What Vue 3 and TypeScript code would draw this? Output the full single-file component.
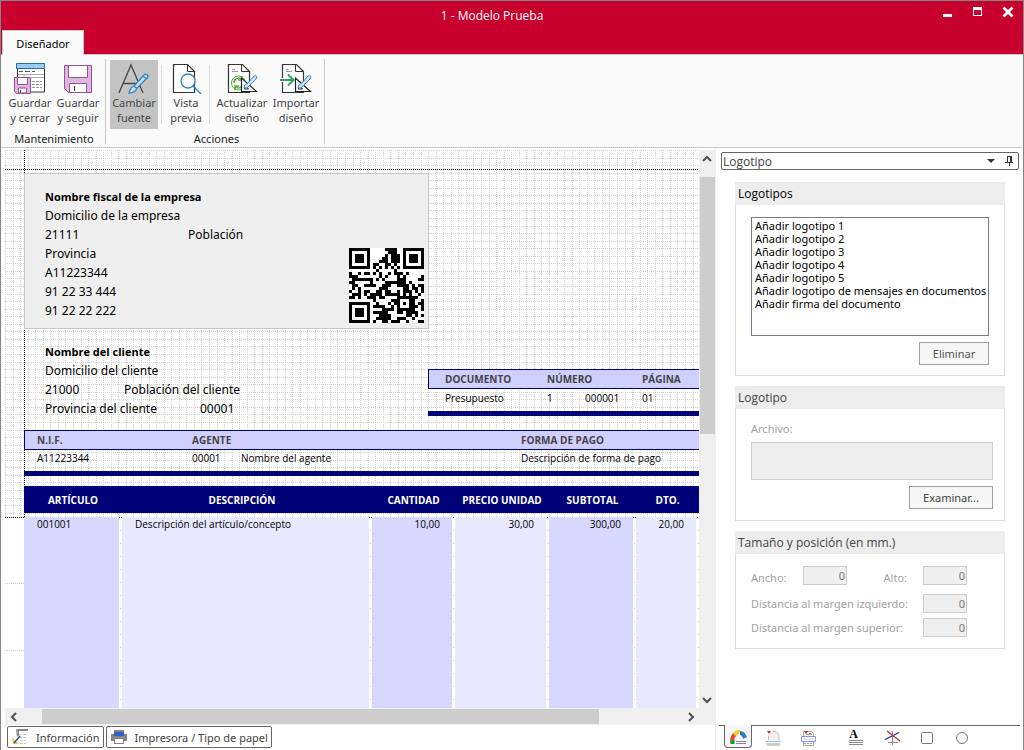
<script setup lang="ts">
import { ref } from 'vue'

interface Line { cells: string[] }

const companyLines: Line[] = [
  { cells: ['Domicilio de la empresa'] },
  { cells: ['21111', 'Población'] },
  { cells: ['Provincia'] },
  { cells: ['A11223344'] },
  { cells: ['91 22 33 444'] },
  { cells: ['91 22 22 222'] },
]

const logos: string[] = [
  'Añadir logotipo 1',
  'Añadir logotipo 2',
  'Añadir logotipo 3',
  'Añadir logotipo 4',
  'Añadir logotipo 5',
  'Añadir logotipo de mensajes en documentos',
  'Añadir firma del documento',
]

const columns: string[] = ['ARTÍCULO', 'DESCRIPCIÓN', 'CANTIDAD', 'PRECIO UNIDAD', 'SUBTOTAL', 'DTO.']
const article: string[] = ['001001', 'Descripción del artículo/concepto', '10,00', '30,00', '300,00', '20,00']

const gridStops: number[] = [0, 8, 15, 23, 30, 38, 45, 53, 60]
const selectedLogo = ref<string | null>(null)
const fileName = ref('')
const size = ref({ width: '0', height: '0', left: '0', top: '0' })

/* QR symbol, version 2 (25 modules), byte mode, one error correction block */
const QR_SIZE = 25

function qrPath(text: string, level: number, dataLen: number, eccLen: number, mask: number): string {
  const exp: number[] = []
  const log: number[] = []
  let v = 1
  for (let i = 0; i < 255; i++) {
    exp[i] = v
    log[v] = i
    v = v << 1
    if (v > 255) v ^= 0x11d
  }
  const mul = (a: number, b: number): number => (a && b ? exp[(log[a] + log[b]) % 255] : 0)

  const bits: number[] = []
  const push = (value: number, count: number) => {
    for (let i = count - 1; i >= 0; i--) bits.push((value >> i) & 1)
  }
  push(4, 4)
  push(text.length, 8)
  for (const ch of text) push(ch.charCodeAt(0), 8)
  push(0, 4)
  while (bits.length % 8) bits.push(0)
  const data: number[] = []
  for (let i = 0; i < bits.length; i += 8) data.push(parseInt(bits.slice(i, i + 8).join(''), 2))
  for (let pad = 0xec; data.length < dataLen; pad ^= 0xfd) data.push(pad)

  let gen: number[] = [1]
  for (let i = 0; i < eccLen; i++) {
    const next: number[] = new Array(gen.length + 1).fill(0)
    gen.forEach((g, k) => {
      next[k] ^= g
      next[k + 1] ^= mul(g, exp[i])
    })
    gen = next
  }
  const rem = [...data, ...new Array(eccLen).fill(0)]
  for (let i = 0; i < data.length; i++) {
    const f = rem[i]
    gen.forEach((g, k) => { rem[i + k] ^= mul(g, f) })
  }
  const words = [...data, ...rem.slice(data.length)]

  const grid: number[][] = Array.from({ length: QR_SIZE }, () => new Array(QR_SIZE).fill(-1))
  const set = (x: number, y: number, on: number | boolean) => {
    if (x >= 0 && y >= 0 && x < QR_SIZE && y < QR_SIZE) grid[y][x] = on ? 1 : 0
  }
  for (let i = 0; i < QR_SIZE; i++) {
    set(6, i, i % 2 === 0)
    set(i, 6, i % 2 === 0)
  }
  for (const [cx, cy] of [[3, 3], [QR_SIZE - 4, 3], [3, QR_SIZE - 4]]) {
    for (let dy = -4; dy <= 4; dy++) {
      for (let dx = -4; dx <= 4; dx++) {
        const d = Math.max(Math.abs(dx), Math.abs(dy))
        set(cx + dx, cy + dy, d !== 2 && d !== 4)
      }
    }
  }
  for (let dy = -2; dy <= 2; dy++) {
    for (let dx = -2; dx <= 2; dx++) set(18 + dx, 18 + dy, Math.max(Math.abs(dx), Math.abs(dy)) !== 1)
  }
  const info = (level << 3) | mask
  let r = info
  for (let i = 0; i < 10; i++) r = (r << 1) ^ ((r >> 9) * 0x537)
  const format = ((info << 10) | r) ^ 0x5412
  const bit = (i: number) => (format >> i) & 1
  for (let i = 0; i < 6; i++) set(8, i, bit(i))
  set(8, 7, bit(6))
  set(8, 8, bit(7))
  set(7, 8, bit(8))
  for (let i = 9; i < 15; i++) set(14 - i, 8, bit(i))
  for (let i = 0; i < 8; i++) set(QR_SIZE - 1 - i, 8, bit(i))
  for (let i = 8; i < 15; i++) set(8, QR_SIZE - 15 + i, bit(i))
  set(8, QR_SIZE - 8, 1)

  const masks: ((x: number, y: number) => boolean)[] = [
    (x, y) => (x + y) % 2 === 0,
    (_x, y) => y % 2 === 0,
    (x) => x % 3 === 0,
    (x, y) => (x + y) % 3 === 0,
    (x, y) => (Math.floor(x / 3) + Math.floor(y / 2)) % 2 === 0,
    (x, y) => ((x * y) % 2) + ((x * y) % 3) === 0,
    (x, y) => (((x * y) % 2) + ((x * y) % 3)) % 2 === 0,
    (x, y) => (((x + y) % 2) + ((x * y) % 3)) % 2 === 0,
  ]
  let n = 0
  for (let right = QR_SIZE - 1; right >= 1; right -= 2) {
    if (right === 6) right = 5
    for (let k = 0; k < QR_SIZE; k++) {
      for (let j = 0; j < 2; j++) {
        const x = right - j
        const y = ((right + 1) & 2) === 0 ? QR_SIZE - 1 - k : k
        if (grid[y][x] !== -1) continue
        const word = words[n >> 3] ?? 0
        const on = (word >> (7 - (n & 7))) & 1
        grid[y][x] = on ^ (masks[mask](x, y) ? 1 : 0)
        n++
      }
    }
  }
  return grid.flatMap((row, y) => row.map((on, x) => (on ? `M${x} ${y}h1v1h-1z` : ''))).join('')
}

const qr = qrPath('https://www.sdelsol.com', 0, 28, 16, 7)
</script>

<template>
  <div class="window">
    <header class="titlebar">
      <h1>1 - Modelo Prueba</h1>
      <div class="winbtns">
        <button type="button" aria-label="Minimizar"><svg width="12" height="12"><path d="M1 8h9v3H1z" fill="#fff" /></svg></button>
        <button type="button" aria-label="Maximizar"><svg width="12" height="12"><path d="M1 1h9v9H1zM2 4v5h7V4z" fill="#fff" fill-rule="evenodd" /></svg></button>
        <button type="button" aria-label="Cerrar"><svg width="12" height="12"><path d="M1.500 1.500l9 9M10.500 1.500l-9 9" stroke="#fff" stroke-width="2.600" /></svg></button>
      </div>
      <nav><button type="button" class="ribbontab">Diseñador</button></nav>
    </header>

    <div class="ribbon">
      <section class="group">
        <div class="tools">
          <button type="button" class="tool">
            <svg width="32" height="32" viewBox="0 0 32 32" fill="none">
              <path d="M3.500 6v24h27V6" fill="#fff" stroke="#333" />
              <path d="M2 1h29v6H2z" fill="#9ccbf2" /><path d="M2.500 1.500h28v5h-28z" stroke="#1f6fae" />
              <path d="M5 9.500h4m2 0h5m2 0h3" stroke="#555" /><path d="M4 12.500h26M10 12v3M10 15.500h20" stroke="#aaa" />
              <path d="M18 19.500h10M18 22.500h10M18 25.500h10" stroke="#999" stroke-dasharray="3 1" />
              <path d="M.5 15.500h16v16h-14l-2-2z" fill="#dcb9dc" stroke="#9b4f9b" />
              <path d="M3.500 15.500h10v7h-10zM4.500 31v-5h8v5z" fill="#fff" stroke="#9b4f9b" /><path d="M6.500 28v3" stroke="#444" />
            </svg>
            <span>Guardar<br>y cerrar</span>
          </button>
          <button type="button" class="tool">
            <svg width="32" height="32" viewBox="0 0 32 32" fill="none">
              <path d="M2.500 3.500h27v27h-23l-4-4z" fill="#dcb9dc" stroke="#9b4f9b" />
              <path d="M6.500 3.500h19v12h-19zM7.500 30.500v-9h17v9z" fill="#fff" stroke="#9b4f9b" />
              <path d="M12.500 24v5" stroke="#333" />
            </svg>
            <span>Guardar<br>y seguir</span>
          </button>
        </div>
        <h2>Mantenimiento</h2>
      </section>
      <section class="group actions">
        <div class="tools">
          <button type="button" class="tool pressed" aria-pressed="true">
            <svg width="32" height="32" viewBox="0 0 32 32" fill="none">
              <path d="M1 31L13 3L25 31M5 21.500h15" stroke="#444" stroke-width="1.300" />
              <path d="M11 31c1-4 2-6 5-7l10-11c2-2 5 0 3.500 2.500L19 26c-1 3-4 5-8 5zM16 24l3 2.500M25 14l3 2.500" fill="#c9dced" stroke="#2e86c9" stroke-width="1.300" />
            </svg>
            <span>Cambiar<br>fuente</span>
          </button>
          <i class="bar"></i>
          <button type="button" class="tool narrow">
            <svg width="32" height="32" viewBox="0 0 32 32" fill="none">
              <path d="M3.500 2.500h14l7 7v21h-21z" fill="#fff" stroke="#333" stroke-width="1.200" /><path d="M17.500 2.500v7h7" stroke="#333" />
              <circle cx="18" cy="19" r="7" fill="#fff" stroke="#2e86c9" stroke-width="1.300" /><path d="M23 24l8 8" stroke="#2e86c9" stroke-width="1.500" />
            </svg>
            <span>Vista<br>previa</span>
          </button>
          <i class="bar"></i>
          <button type="button" class="tool wide">
            <svg width="32" height="32" viewBox="0 0 32 32" fill="none">
              <path d="M2.500 2.500h14l7 7v21h-21z" fill="#fff" stroke="#333" stroke-width="1.200" /><path d="M15.500 2.500v7h8" stroke="#333" />
              <path d="M6 7.500h3M6 9.500h6" stroke="#999" />
              <circle cx="12.500" cy="21" r="7" fill="#fff" stroke="#57b045" />
              <path d="M8 21c0-5 5-6 7-4m1-3v4h-4M17 21c0 5-5 6-7 4m-1 3v-4h4" stroke="#57b045" stroke-width="1.600" />
              <path d="M15.500 16v13.500h15z" fill="#fff" stroke="#222" stroke-width="1.200" /><path d="M18.500 23v4h4z" stroke="#222" />
              <path d="M18 26c0-3 2-4 4-5l6-7c2-1 4 0 2 3l-7 7c-1 2-3 2-5 2z" fill="#cfe3f4" stroke="#2e86c9" />
            </svg>
            <span>Actualizar<br>diseño</span>
          </button>
          <button type="button" class="tool wide">
            <svg width="32" height="32" viewBox="0 0 32 32" fill="none">
              <path d="M2.500 2.500h14l7 7v21h-21z" fill="#fff" stroke="#333" stroke-width="1.200" /><path d="M15.500 2.500v7h8" stroke="#333" />
              <path d="M6 7.500h3M6 9.500h6" stroke="#999" />
              <path d="M0 18h14M8 12l6 6-6 6" stroke="#fff" stroke-width="4" /><path d="M0 18h13M8 12.500l5.500 5.500-5.500 5.500" stroke="#2ea65a" stroke-width="2" />
              <path d="M15.500 16v13.500h15z" fill="#fff" stroke="#222" stroke-width="1.200" /><path d="M18.500 23v4h4z" stroke="#222" />
              <path d="M18 26c0-3 2-4 4-5l6-7c2-1 4 0 2 3l-7 7c-1 2-3 2-5 2z" fill="#cfe3f4" stroke="#2e86c9" />
            </svg>
            <span>Importar<br>diseño</span>
          </button>
        </div>
        <h2>Acciones</h2>
      </section>
    </div>

    <div class="work">
      <main class="left">
        <div class="view">
          <div class="canvas">
            <svg class="gridlines" width="100%" height="367" shape-rendering="crispEdges" aria-hidden="true">
              <defs>
                <pattern id="mm" width="68" height="68" patternUnits="userSpaceOnUse">
                  <g stroke="#d2d2d2" stroke-dasharray="1 1">
                    <path v-for="s in gridStops" :key="s" :d="`M${s + 0.5} 0v68M0 ${s + 0.5}h68`" />
                  </g>
                </pattern>
              </defs>
              <rect width="100%" height="100%" fill="url(#mm)" />
              <path d="M19.500 0v367" stroke="#000" stroke-dasharray="1 1" />
              <line x1="0" y1="19.500" x2="100%" y2="19.500" stroke="#000" stroke-dasharray="1 1" />
            </svg>
            <svg class="ruled" width="100%" height="100%" shape-rendering="crispEdges" aria-hidden="true">
              <line x1="0" y1=".5" x2="100%" y2=".5" stroke="#000" stroke-dasharray="1 1" />
              <path d="M0 66.500h19M0 133.500h19" stroke="#d2d2d2" stroke-dasharray="1 1" />
              <path d="M115.500 13v180M365.500 13v180M448.500 13v180M543.500 13v180M629.500 13v180M693.500 13v180" stroke="#d2d2d2" stroke-dasharray="1 12" />
            </svg>

            <section class="company">
              <div>
                <h3>Nombre fiscal de la empresa</h3>
                <p v-for="(line, i) in companyLines" :key="i" class="line">
                  <span v-for="c in line.cells" :key="c">{{ c }}</span>
                </p>
              </div>
              <svg class="qr" width="75" height="75" viewBox="0 0 25 25" shape-rendering="crispEdges" role="img" aria-label="Código QR">
                <path d="M0 0h25v25H0z" fill="#fff" /><path :d="qr" fill="#000" />
              </svg>
            </section>

            <section class="client">
              <h3>Nombre del cliente</h3>
              <p class="line">Domicilio del cliente</p>
              <p class="line"><span class="zip">21000</span><span>Población del cliente</span></p>
              <p class="line"><span class="prov">Provincia del cliente</span><span>00001</span></p>
            </section>

            <table class="strip doc">
              <colgroup><col class="d1"><col class="d2"><col class="d3"><col></colgroup>
              <thead><tr><th>DOCUMENTO</th><th colspan="2">NÚMERO</th><th>PÁGINA</th></tr></thead>
              <tbody><tr><td>Presupuesto</td><td>1</td><td>000001</td><td>01</td></tr></tbody>
            </table>

            <table class="strip agent">
              <colgroup><col class="a1"><col class="a2"><col class="a3"><col></colgroup>
              <thead><tr><th>N.I.F.</th><th colspan="2">AGENTE</th><th>FORMA DE PAGO</th></tr></thead>
              <tbody><tr><td>A11223344</td><td>00001</td><td>Nombre del agente</td><td>Descripción de forma de pago</td></tr></tbody>
            </table>

            <table class="items">
              <colgroup><col class="c1"><col class="c2"><col class="c3"><col class="c4"><col class="c5"><col></colgroup>
              <thead><tr><th v-for="c in columns" :key="c">{{ c }}</th></tr></thead>
              <tbody><tr><td v-for="c in article" :key="c">{{ c }}</td></tr></tbody>
            </table>
          </div>
          <div class="vscroll">
            <button type="button" aria-label="Subir"><svg width="10" height="8"><path d="M1 6l4-4 4 4" stroke="#505050" stroke-width="2" fill="none" /></svg></button>
            <div class="vtrack"><div class="vthumb"></div></div>
            <button type="button" aria-label="Bajar"><svg width="10" height="8"><path d="M1 2l4 4 4-4" stroke="#505050" stroke-width="2" fill="none" /></svg></button>
          </div>
        </div>
        <div class="hscroll">
          <button type="button" aria-label="Izquierda"><svg width="8" height="10"><path d="M6 1L2 5l4 4" stroke="#505050" stroke-width="2" fill="none" /></svg></button>
          <div class="htrack"><div class="hthumb"></div></div>
          <button type="button" aria-label="Derecha"><svg width="8" height="10"><path d="M2 1l4 4-4 4" stroke="#505050" stroke-width="2" fill="none" /></svg></button>
        </div>
        <footer class="docks">
          <button type="button">
            <svg width="18" height="18" fill="none"><path d="M5 3c0-2 1-2 3-2h9v2H8v5H6z" fill="#888" /><path d="M6 3v6M8 6.500h7M8 9.500h7M9 12.500h6M9 15.500h6" stroke="#ccc" stroke-dasharray="3 1" /><path d="M1 9l1 7h6l-4-3z" fill="#f0c050" /><path d="M3 15l6-7" stroke="#1d5c80" stroke-width="1.500" /></svg>
            Información
          </button>
          <button type="button">
            <svg width="18" height="18"><path d="M4 2h10v3H4zM1 6h16v7h-3v3H4v-3H1z" fill="#858585" /><path d="M4 4h10v4H4z" fill="#2d5fd0" /><path d="M5 11h8v4H5z" fill="#fff" /></svg>
            Impresora / Tipo de papel
          </button>
        </footer>
      </main>

      <aside class="side">
        <div class="dockhead">
          <span>Logotipo</span>
          <button type="button" aria-label="Elegir panel"><svg width="8" height="5"><path d="M0 0h8L4 4z" fill="#333" /></svg></button>
          <button type="button" aria-label="Fijar panel"><svg width="9" height="10" fill="none" stroke="#333" shape-rendering="crispEdges"><path d="M2.500 6V.5h4V6M0 6.500h8M4.500 6v4M5.500 1v5" /></svg></button>
        </div>

        <section class="box">
          <h2 id="logos-title" class="dark">Logotipos</h2>
          <div class="body">
            <select v-model="selectedLogo" class="list" size="9" aria-labelledby="logos-title">
              <option v-for="l in logos" :key="l" :value="l">{{ l }}</option>
            </select>
            <button type="button" class="btn remove">Eliminar</button>
          </div>
        </section>

        <section class="box">
          <h2>Logotipo</h2>
          <div class="body file">
            <label for="file">Archivo:</label>
            <textarea id="file" v-model="fileName" disabled></textarea>
            <button type="button" class="btn browse">Examinar...</button>
          </div>
        </section>

        <section class="box">
          <h2>Tamaño y posición (en mm.)</h2>
          <div class="body dims">
            <label for="w">Ancho:</label><input id="w" v-model="size.width" disabled>
            <label for="h" class="alto">Alto:</label><input id="h" v-model="size.height" disabled>
            <label for="ml" class="long">Distancia al margen izquierdo:</label><input id="ml" v-model="size.left" disabled>
            <label for="mt" class="long">Distancia al margen superior:</label><input id="mt" v-model="size.top" disabled>
          </div>
        </section>

        <nav class="tabs">
          <button type="button" class="active" aria-label="Logotipo"><svg width="17" height="16" fill="none"><path d="M2.500 13C1.500 9 3 6 5 4" stroke="#e04a32" stroke-width="4" /><path d="M2.500 14v-4" stroke="#17a52a" stroke-width="4" /><path d="M4 4.500c2-2 4-3 6-2" stroke="#f1cf2c" stroke-width="4" /><path d="M10 3c2 0 4 2 5 5" stroke="#2d78cf" stroke-width="4" /><path d="M5 10h12v6H5z" fill="#f6f6fc" /><path d="M6 11.500h10M6 13.500h10" stroke="#888" /></svg></button>
          <button type="button" aria-label="Imagen de página"><svg width="17" height="16" fill="none"><path d="M3 5l1 5h10V4l-3-3H8z" fill="#f1f1f1" /><path d="M2 1h4L4 4z" fill="#d22" /><path d="M8 1.500h3l3 3v6M3.500 6v4" stroke="#bbb" /><path d="M1 11.500h15" stroke="#8cc4ec" /><path d="M2 13h13v3H2z" fill="#ccc" /></svg></button>
          <button type="button" aria-label="Secciones"><svg width="17" height="16" fill="none"><path d="M3.500 6V1.500h8l2 2V6M3.500 11v4.500h10V11" stroke="#aaa" /><path d="M4 1h4L6 4z" fill="#d22" /><path d="M9 3.500h2M6 4.500h6" stroke="#999" /><path d="M1.500 6.500h14v5h-14z" stroke="#8e8ef5" fill="#fff" /><path d="M4 9h9" stroke="#ccc" /><path d="M4 13.500h9" stroke="#8e8ef5" stroke-dasharray="2 1" /></svg></button>
          <button type="button" class="gap text" aria-label="Textos"><span>A</span><svg width="15" height="5"><path d="M0 .5h14M0 2.500h14M0 4.500h14" stroke="#888" /></svg></button>
          <button type="button" aria-label="Líneas"><svg width="17" height="16" fill="none"><path d="M9.500 1v14M5 12.500h10" stroke="#888" /><path d="M2 9.500L16 2.500" stroke="#22c" stroke-width="1.300" /><path d="M4 1l13 10" stroke="#e22" stroke-width="1.300" /></svg></button>
          <button type="button" aria-label="Rectángulo"><svg width="17" height="16" fill="none"><rect x="3.500" y="2.500" width="11" height="11" rx="1" stroke="#777" /></svg></button>
          <button type="button" aria-label="Elipse"><svg width="17" height="16" fill="none"><circle cx="9" cy="8" r="5.500" stroke="#777" /></svg></button>
        </nav>
      </aside>
    </div>
  </div>
</template>

<style>
body { margin: 0; }
</style>

<style scoped>
* { box-sizing: border-box; }
h1, h2, h3, p { margin: 0; font-weight: 400; }
button { border: 0; padding: 0; background: none; font: inherit; color: inherit; }
svg { display: block; }

.window {
  display: flex; flex-direction: column; height: 100vh; min-height: 700px;
  border: 1px solid #858585; border-bottom: 0; background: #fff;
  font: 11px/15px "Noto Sans", "Open Sans", sans-serif; color: #444;
}
.titlebar { position: relative; background: #c8002d; color: #fff; height: 54px; flex: none; border-bottom: 1px solid #c8c8c8; }
h1 { font: 12px/29px "Open Sans", sans-serif; text-align: center; padding-right: 40px; }
.winbtns { position: absolute; top: 5px; right: 9px; display: flex; gap: 18px; }
nav { display: flex; }
.ribbontab { height: 25px; width: 82px; background: #fafafa; color: #000; border: 1px solid #c8c8c8; border-bottom: 0; margin-left: 1px; }
.ribbon { display: flex; flex: none; height: 93px; background: #fafafa; border-bottom: 1px solid #c8c8c8; padding: 4px 0 0 5px; }
.group { display: flex; flex-direction: column; height: 85px; padding-right: 3px; margin-right: 4px; border-right: 1px solid #c8c8c8; }
.group h2 { font-size: 11px; text-align: center; line-height: 18px; color: #222; }
.actions { padding-right: 1px; }
.tools { display: flex; flex: none; align-items: center; height: 71px; }
.tool { width: 48px; height: 69px; display: flex; flex-direction: column; align-items: center; gap: 1px; white-space: nowrap; }
.tool svg { margin-top: 2px; }
.pressed { background: #c4c4c4; }
.narrow { width: 40px; }
.wide { width: 54px; }
.bar { width: 1px; height: 59px; background: #dcdcdc; margin: 0 4px 0 3px; }
.narrow + .bar { margin-right: 5px; }

.work { display: flex; flex: 1; min-height: 0; }
.left { flex: 1; min-width: 0; display: flex; flex-direction: column; padding: 2px 0 0 4px; }
.view { display: flex; flex: 1; min-height: 0; }
.canvas { position: relative; flex: 1; overflow: hidden; font-size: 12px; color: #000; }
.gridlines { position: absolute; left: 0; top: 0; }
.ruled { position: absolute; left: 0; top: 367px; }
.canvas h3 { font: bold 11px/19px "Open Sans", sans-serif; color: #000; }
.line { line-height: 19px; display: flex; white-space: nowrap; }
.company {
  position: absolute; left: 19px; top: 23px; width: 405px; height: 156px;
  display: flex; justify-content: space-between; align-items: flex-end;
  background: #efefef; border: 1px solid #c8c8c8; padding: 0 4px 8px 20px;
}
.line > span:first-child { min-width: 143px; }
.qr { margin-bottom: -3px; }
.client { position: absolute; left: 40px; top: 192px; }
.line > .zip:first-child { min-width: 79px; }
.line > .prov:first-child { min-width: 155px; }

table { table-layout: fixed; border-spacing: 0; }
th, td { padding: 0; text-align: left; white-space: nowrap; font-size: 10px; font-family: "Open Sans", sans-serif; }
th { font-weight: 700; }
.strip { position: absolute; right: 0; border-bottom: 5px solid #000078; }
.strip th { height: 20px; background: #d0d0ff; border: solid #000078; border-width: 1px 0; color: #444; }
.strip th:first-child { border-left-width: 1px; padding-left: 16px; }
.strip td { height: 18px; padding-top: 2px; }
.strip td:first-child { padding-left: 17px; }
.strip tbody tr { height: 21px; vertical-align: top; }
.doc { left: 423px; top: 219px; width: calc(100% - 423px); }
.doc tbody tr { height: 22px; }
.d1 { width: 119px; } .d2 { width: 38px; } .d3 { width: 57px; }
.agent { left: 19px; top: 280px; width: calc(100% - 19px); }
.agent th:first-child { padding-left: 12px; }
.agent td { padding-top: 1px; }
.agent td:first-child { padding-left: 13px; }
.a1 { width: 168px; } .a2 { width: 49px; } .a3 { width: 280px; }
.items { position: absolute; left: 19px; top: 336px; bottom: 0; width: calc(100% - 19px); height: calc(100% - 336px); }
.c1 { width: 98px; } .c2 { width: 250px; } .c3 { width: 83px; } .c4 { width: 94px; } .c5 { width: 87px; }
.items th { height: 31px; background: #000078; background-clip: padding-box; border-bottom: 4px solid transparent; color: #fff; text-align: center; padding-top: 1px; }
.items th:nth-child(2) { padding-right: 10px; }
.items td { background: #e8e8ff; background-clip: padding-box; border-right: 3px solid transparent; vertical-align: top; text-align: right; padding-right: 12px; line-height: 14px; }
.items td:nth-child(odd) { background-color: #d8d8ff; }
.items td:nth-child(-n+2) { text-align: left; padding-left: 13px; }

.vscroll { width: 16px; flex: none; background: #f0f0f0; display: flex; flex-direction: column; }
.vscroll button { height: 17px; display: grid; place-items: center; }
.vtrack { flex: 1; padding: 10px 0 0 1px; }
.vthumb { width: 15px; height: 50%; background: #cdcdcd; }
.hscroll { height: 17px; flex: none; background: #f0f0f0; display: flex; }
.hscroll button { width: 17px; display: grid; place-items: center; }
.hscroll button:last-child { margin-right: 16px; }
.htrack { flex: 1; padding: 1px 0 1px 20px; }
.hthumb { width: 87%; height: 15px; background: #cdcdcd; }
.docks { display: flex; gap: 2px; padding: 1px 0 2px 2px; flex: none; }
.docks button { display: flex; align-items: center; gap: 7px; height: 22px; padding: 0 3px; border: 1px solid #666; border-radius: 2px; }

.side { width: 308px; flex: none; display: flex; flex-direction: column; border-left: 1px solid #f0f0f0; padding: 4px 3px 0 3px; }
.dockhead { display: flex; align-items: center; gap: 10px; height: 18px; margin: 0 1px 0 2px; border: 1px solid #666; border-radius: 2px; padding: 0 4px 0 1px; }
.dockhead span { flex: 1; }
.box { margin: 0 15px 10px 16px; }
.dockhead + .box { margin-top: 12px; }
.box h2, .dockhead span { font: 12px/23px "Open Sans", sans-serif; }
.box h2 { background: #ededed; padding-left: 3px; }
.box h2.dark { color: #000; }
.body { border: 1px solid #dcdcdc; border-top: 0; padding: 12px 15px 10px; display: flex; flex-direction: column; align-items: flex-end; }
.list { width: 238px; height: 119px; border: 1px solid #7a7a88; border-radius: 0; background: #fff; padding: 0; overflow: hidden; font: 11px/13px "Noto Sans", sans-serif; color: #000; outline: 0; align-self: flex-start; }
.list option { padding: 0 3px; height: 13px; min-height: 13px; }
.btn { height: 23px; border: 1px solid #a0a0a0; background: #f7f7f7; color: #555; }
.remove { width: 70px; margin: 6px 0 0; }
.file { padding: 12px 11px 11px 15px; }
.file label { align-self: flex-start; height: 21px; line-height: 15px; }
label { color: #a3a3a3; }
textarea { width: 100%; height: 38px; resize: none; border: 1px solid #ccc; background: #efefef; border-radius: 0; padding: 0; }
.browse { width: 84px; margin-top: 6px; color: #444; }
.dims { display: grid; grid-template-columns: 52px 44px 76px 44px; row-gap: 5px; padding: 12px 15px 11px; align-items: center; justify-content: start; justify-items: start; }
.dims .alto { justify-self: end; margin-right: 16px; }
.dims .long { grid-column: 1 / 4; }
.dims input { width: 44px; height: 19px; border: 1px solid #ccc; background: #efefef; border-radius: 0; padding: 0 1px; text-align: right; font: 11px/15px "Noto Sans", sans-serif; color: #777; margin-bottom: 4px; }
.dims input:nth-of-type(n+3) { margin-bottom: 0; }

.tabs { margin-top: auto; height: 25px; border-top: 1px solid #666; display: flex; padding-left: 5px; }
.tabs button { width: 35px; display: flex; justify-content: center; padding-top: 4px; }
.tabs .active { width: 28px; height: 23px; margin: -1px 4px 0 0; padding-top: 5px; background: #f6f6fc; border: 1px solid #666; border-top: 0; border-radius: 0 0 4px 4px; }
.tabs .gap { margin-left: 13px; }
.tabs .text { flex-direction: column; justify-content: flex-start; align-items: center; padding-top: 2px; }
.tabs .text span { font: bold 12px/12px "Liberation Serif", serif; color: #000; margin-right: 6px; }
</style>
